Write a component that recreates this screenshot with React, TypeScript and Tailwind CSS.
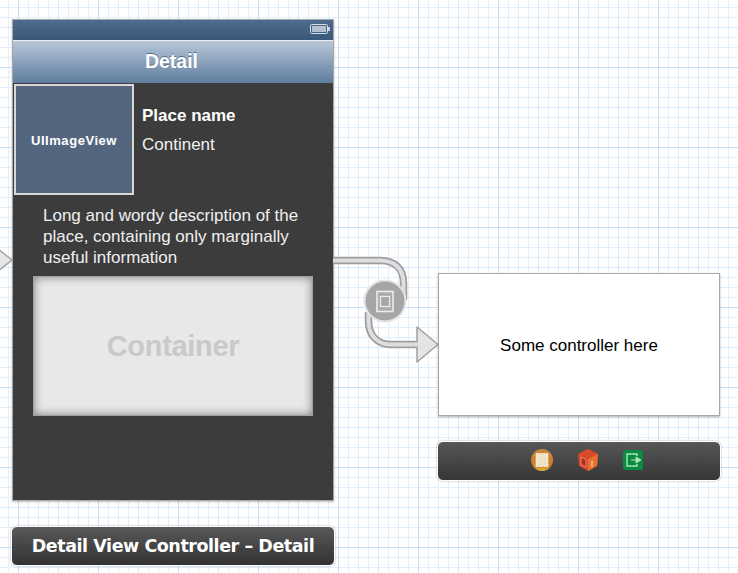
const sans = "font-['Liberation_Sans',Arial,sans-serif]";

function Battery() {
  return (
    <svg width="20" height="11" viewBox="0 0 20 11" className="absolute right-[3px] top-[4px]">
      <rect x="0.5" y="0.5" width="17" height="9" rx="1" fill="none" stroke="#d5dde8" />
      <rect x="2" y="2" width="14" height="6" fill="#b4bfce" />
      <rect x="18" y="3" width="2" height="4" fill="#c5cfdb" />
    </svg>
  );
}

// segue from the detail controller into the embedded one
function Segue() {
  return (
    <svg width="120" height="120" viewBox="0 0 120 120" className="absolute left-[330px] top-[250px]">
      <defs>
        <pattern id="hatch" width="2" height="2" patternUnits="userSpaceOnUse" patternTransform="rotate(45)">
          <rect width="2" height="2" fill="#bdbdbd" />
          <rect width="1" height="2" fill="#9c9c9c" />
        </pattern>
      </defs>
      <path d="M3 10.5 H50 C65 10.5 73.5 19 73.5 33 V50" fill="none" stroke="#9e9e9e" strokeWidth="7.5" />
      <path d="M3 10.5 H50 C65 10.5 73.5 19 73.5 33 V50" fill="none" stroke="#dedede" strokeWidth="4" />
      <path d="M38.5 62 V71 C38.5 85 47 94.5 61 94.5 H88" fill="none" stroke="#9e9e9e" strokeWidth="7.5" />
      <path d="M38.5 62 V71 C38.5 85 47 94.5 61 94.5 H88" fill="none" stroke="#dedede" strokeWidth="4" />
      <path d="M87 77 L108 94.5 L87 112 Z" fill="#e4e4e4" stroke="#a0a0a0" strokeWidth="1.5" strokeLinejoin="round" />
      <path d="M85 92.5 H88 V96.5 H85 Z" fill="#dedede" />
      <circle cx="55" cy="51" r="20.5" fill="#a6a6a6" stroke="#e4e4e4" strokeWidth="2" />
      <rect x="47" y="41.5" width="16" height="20" fill="url(#hatch)" stroke="#ececec" strokeWidth="1.6" />
      <rect x="50.5" y="46.5" width="9" height="10" fill="#a6a6a6" stroke="#ececec" strokeWidth="1.2" />
    </svg>
  );
}

function DockIcons() {
  return (
    <div className="flex items-center gap-[25px]">
      <svg width="22" height="22" viewBox="0 0 22 22">
        <defs>
          <linearGradient id="orb" x1="0" y1="0" x2="0" y2="1">
            <stop offset="0" stopColor="#c98a42" />
            <stop offset="0.75" stopColor="#cf7c26" />
            <stop offset="1" stopColor="#e0b83a" />
          </linearGradient>
        </defs>
        <circle cx="11" cy="11" r="11" fill="url(#orb)" />
        <rect x="5" y="4.5" width="12" height="13" fill="#efe2c6" stroke="#fbf7ea" strokeDasharray="1.5 1" />
      </svg>
      <svg width="20" height="22" viewBox="0 0 20 22">
        <path d="M10 0 L20 5 L19 17 L10 22 L1 17 L0 5 Z" fill="#d9472a" />
        <path d="M10 0 L20 5 L10 10 L0 5 Z" fill="#d94a28" />
        <path d="M10 10 L20 5 L19 17 L10 22 Z" fill="#e8702f" />
        <path d="M3 8 L8 10.5 V18 L3 15.5 Z" fill="#b02c1e" stroke="#ee9c86" strokeWidth="0.8" />
        <path d="M14 12 V18" stroke="#f8d0b0" strokeWidth="1.2" />
      </svg>
      <svg width="20" height="20" viewBox="0 0 20 20">
        <rect width="20" height="20" rx="2.5" fill="#0a8c40" />
        <path d="M14 6 V4 H4 V16 H14 V14" fill="none" stroke="#a6e4b8" strokeWidth="1.4" />
        <path d="M8 10 H13 V7 L18 10 L13 13 V10" fill="#a6e4b8" stroke="#a6e4b8" strokeWidth="1" />
      </svg>
    </div>
  );
}

export default function App() {
  return (
    <div
      className={`relative h-[573px] w-[738px] overflow-hidden bg-white ${sans} bg-[linear-gradient(#c8dff9_1px,transparent_1px),linear-gradient(90deg,#c8dff9_1px,transparent_1px),linear-gradient(#d8e8fb_1px,transparent_1px),linear-gradient(90deg,#d8e8fb_1px,transparent_1px),linear-gradient(#e4effc_1px,transparent_1px),linear-gradient(90deg,#e4effc_1px,transparent_1px)] bg-[size:80px_80px,80px_80px,40px_40px,40px_40px,10px_10px,10px_10px] bg-[position:0_67px,18px_0,0_27px,18px_0,0_7px,8px_0]`}
    >
      {/* incoming arrow, cut off by the left edge */}
      <svg width="13" height="24" viewBox="0 0 13 24" className="absolute left-0 top-[248px]">
        <path d="M-2 1 L12 12 L-2 23 Z" fill="#e6e6e6" stroke="#a6a6a6" strokeWidth="1.5" />
      </svg>

      {/* Detail scene */}
      <div className="absolute left-[12px] top-[19px] flex h-[482px] w-[322px] flex-col border border-[#a8a8a8] bg-[#3c3c3c] shadow-[0_1px_2px_rgba(0,0,0,0.25)]">
        <div className="relative h-[20px] shrink-0 bg-gradient-to-b from-[#4e6c8e] to-[#3a5879]">
          <Battery />
        </div>
        <div className="h-[43px] shrink-0 border-t border-[#e8edf3] border-b-[#3f5670] bg-gradient-to-b from-[#b8c7d9] to-[#5f7d9e] pr-[3px] text-center text-[19.5px] leading-[41px] font-bold text-white [text-shadow:0_-1px_0_rgba(60,80,105,0.7)]">
          Detail
        </div>
        <div className="flex shrink-0">
          <div className="ml-[1px] mt-[1px] flex h-[111px] w-[120px] items-center justify-center border-2 border-[#d8d8d8] bg-[#54667e] pt-[2px] text-[13px] font-bold tracking-[0.55px] text-white">
            UIImageView
          </div>
          <div className="ml-[8px] pt-[23px] text-white">
            <div className="text-[17px] leading-[20px] font-bold">Place name</div>
            <div className="mt-[9px] text-[17px] leading-[20px] font-light text-[#f2f2f2]">Continent</div>
          </div>
        </div>
        <p className="mx-[30px] mt-[10px] text-[17px] leading-[21px] text-[#f0f0f0]">
          Long and wordy description of the place, containing only marginally useful information
        </p>
        <div className="mx-[20px] mt-[8px] flex h-[140px] items-center justify-center border border-[#a0a0a0] bg-[#e8e8e8] pt-[2px] text-[29px] font-bold tracking-[-0.3px] text-[#c9c9c9] shadow-[inset_0_0_10px_rgba(0,0,0,0.45)]">
          Container
        </div>
      </div>

      <Segue />

      {/* embedded scene */}
      <div className="absolute left-[438px] top-[273px] flex h-[143px] w-[282px] items-center justify-center border border-[#a8a8a8] bg-white pt-[2px] text-[17px] text-black shadow-[0_1px_2px_rgba(0,0,0,0.3)]">
        Some controller here
      </div>
      <div className="absolute left-[437px] top-[441px] flex h-[40px] w-[284px] items-center justify-center rounded-[6px] border border-white bg-gradient-to-b from-[#4e4e4e]/95 to-[#2c2c2c]/95 pb-[2px] pl-[16px] shadow-[0_0_2px_rgba(0,0,0,0.4)]">
        <DockIcons />
      </div>

      {/* scene label */}
      <div className="absolute left-[11px] top-[526px] flex h-[40px] w-[324px] items-center justify-center rounded-[6px] border border-white bg-gradient-to-b from-[#505050]/95 to-[#282828]/95 font-['DejaVu_Sans',sans-serif] text-[17.5px] font-bold tracking-[-0.45px] text-white shadow-[0_0_2px_rgba(0,0,0,0.4)]">
        Detail View Controller – Detail
      </div>
    </div>
  );
}
